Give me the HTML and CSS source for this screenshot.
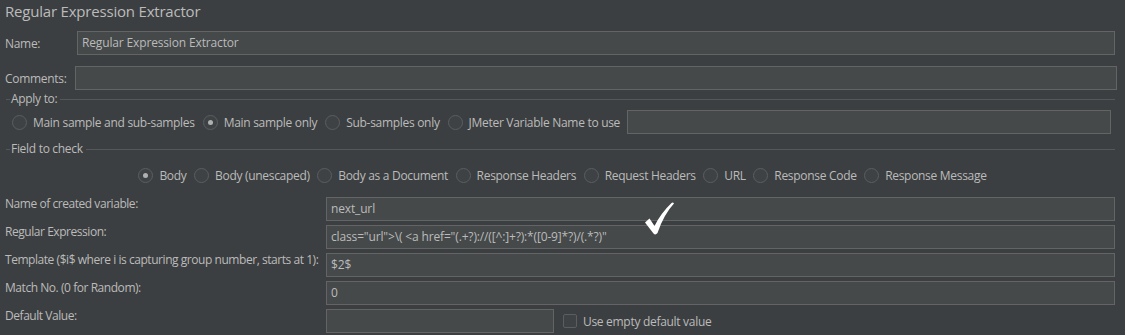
FILE: index.html
```html
<!DOCTYPE html>
<html lang="en">
<head>
<meta charset="utf-8">
<title>Regular Expression Extractor</title>
<link rel="stylesheet" href="styles.css">
</head>
<body>
<div class="panel">
  <h1 class="title">Regular Expression Extractor</h1>

  <div class="row row-name">
    <span class="lbl">Name:</span>
    <div class="field">Regular Expression Extractor</div>
  </div>

  <div class="row row-comments">
    <span class="lbl">Comments:</span>
    <div class="field"></div>
  </div>

  <div class="group group-apply">
    <div class="legend"><span class="dash"></span><span class="legend-text">Apply to:</span><span class="rule"></span></div>
    <div class="radios radios-apply">
      <span class="radio"><span class="dot"></span>Main sample and sub-samples</span>
      <span class="radio checked"><span class="dot"></span>Main sample only</span>
      <span class="radio"><span class="dot"></span>Sub-samples only</span>
      <span class="radio"><span class="dot"></span>JMeter Variable Name to use</span>
      <div class="field var-field"></div>
    </div>
  </div>

  <div class="group group-check">
    <div class="legend"><span class="dash"></span><span class="legend-text">Field to check</span><span class="rule"></span></div>
    <div class="radios radios-center">
      <span class="radio checked"><span class="dot"></span>Body</span>
      <span class="radio"><span class="dot"></span>Body (unescaped)</span>
      <span class="radio"><span class="dot"></span>Body as a Document</span>
      <span class="radio"><span class="dot"></span>Response Headers</span>
      <span class="radio"><span class="dot"></span>Request Headers</span>
      <span class="radio"><span class="dot"></span>URL</span>
      <span class="radio"><span class="dot"></span>Response Code</span>
      <span class="radio"><span class="dot"></span>Response Message</span>
    </div>
  </div>

  <div class="form-grid">
    <span class="glbl">Name of created variable:</span>
    <div class="field">next_url</div>

    <span class="glbl">Regular Expression:</span>
    <div class="field">class="url"&gt;\( &lt;a href="(.+?)://([^:]+?):*([0-9]*?)/(.*?)"</div>

    <span class="glbl">Template ($i$ where i is capturing group number, starts at 1):</span>
    <div class="field">$2$</div>

    <span class="glbl">Match No. (0 for Random):</span>
    <div class="field">0</div>

    <span class="glbl">Default Value:</span>
    <div class="default-row">
      <div class="field default-field"></div>
      <span class="checkbox"><span class="box"></span>Use empty default value</span>
    </div>
  </div>

  <svg class="check" width="40" height="40" viewBox="0 0 40 40" aria-hidden="true">
    <path d="M3 24.5 L7.5 20.5 L12.5 28 Q19 15 29.5 5 Q31 4 32 5.5 Q22 16 15.5 35 Q13.5 37.5 11.5 35.5 Z" fill="#ffffff"/>
  </svg>
</div>
</body>
</html>
```

FILE: styles.css
```css
* { box-sizing: border-box; }

html, body {
  margin: 0;
  padding: 0;
  background: #3c3f41;
}

body {
  width: 1125px;
  height: 335px;
  overflow: hidden;
  font-family: "Open Sans", "Noto Sans", sans-serif;
  font-size: 12px;
  letter-spacing: -0.3px;
  color: #bbbbbb;
}

.panel {
  position: relative;
  height: 335px;
}

.title {
  margin: 0;
  padding-left: 5px;
  font-weight: normal;
  font-size: 15px;
  letter-spacing: -0.2px;
  line-height: 22px;
  color: #bbbbbb;
}

.field {
  height: 24px;
  background: #45494a;
  border: 1px solid #646464;
  color: #bbbbbb;
  line-height: 22px;
  padding: 0 4px;
  letter-spacing: -0.15px;
  white-space: nowrap;
  overflow: hidden;
}

.row {
  display: flex;
  align-items: center;
}

.row .field { flex: 1; }

.row-name {
  margin-top: 9px;
  padding-right: 10px;
}
.row-name .lbl { width: 77px; padding-left: 5px; }

.row-comments {
  margin-top: 11px;
  padding-right: 8px;
}
.row-comments .lbl { width: 75px; padding-left: 5px; }

.legend {
  display: flex;
  align-items: center;
  height: 14px;
  padding-left: 6px;
  padding-right: 10px;
}
.dash {
  width: 4px;
  height: 1px;
  background: #55585a;
}
.legend-text {
  padding: 0 3px 0 1px;
  line-height: 14px;
}
.rule {
  flex: 1;
  height: 1px;
  background: #55585a;
}

.group-apply { margin-top: 2px; }
.group-check { margin-top: 8px; }

.radios {
  display: flex;
  align-items: center;
  height: 24px;
}

.radios-apply {
  margin-top: 4px;
  padding-left: 12px;
  padding-right: 14px;
}

.radios-center {
  margin-top: 7px;
  justify-content: center;
  gap: 7.5px;
}

.radio {
  display: inline-flex;
  align-items: center;
  white-space: nowrap;
}

.radios-apply .radio { margin-right: 8px; }

.dot {
  width: 15px;
  height: 15px;
  border-radius: 50%;
  border: 1px solid #5b5e60;
  background: #3f4244;
  margin-right: 6px;
  display: inline-flex;
  align-items: center;
  justify-content: center;
}

.radio.checked .dot::after {
  content: "";
  width: 5px;
  height: 5px;
  border-radius: 50%;
  background: #b0b0b0;
}

.var-field {
  flex: 1;
  margin-left: -1px;
}

.form-grid {
  margin-top: 10px;
  display: grid;
  grid-template-columns: 326px 789px;
  row-gap: 4px;
}

.glbl {
  padding-left: 5px;
  line-height: 14px;
  letter-spacing: -0.45px;
  white-space: nowrap;
}

.default-row {
  display: flex;
  align-items: center;
}

.default-field { width: 228px; }

.checkbox {
  display: inline-flex;
  align-items: center;
  margin-left: 9px;
}

.box {
  width: 14px;
  height: 14px;
  border: 1px solid #5b5e60;
  border-radius: 2px;
  background: #3f4244;
  margin-right: 6px;
}

.check {
  position: absolute;
  left: 642px;
  top: 198px;
}
```
